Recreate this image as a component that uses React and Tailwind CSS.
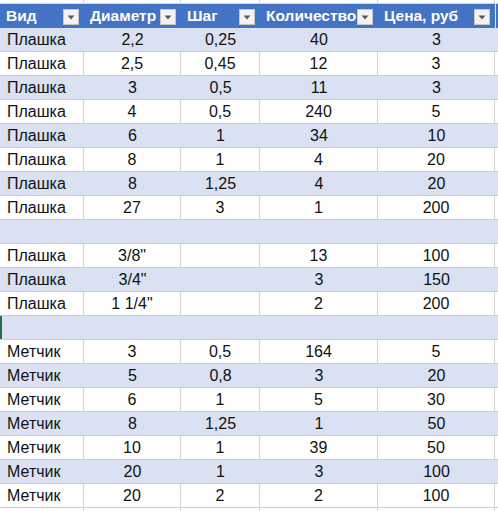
const rows = [
  ["Плашка", "2,2", "0,25", "40", "3"],
  ["Плашка", "2,5", "0,45", "12", "3"],
  ["Плашка", "3", "0,5", "11", "3"],
  ["Плашка", "4", "0,5", "240", "5"],
  ["Плашка", "6", "1", "34", "10"],
  ["Плашка", "8", "1", "4", "20"],
  ["Плашка", "8", "1,25", "4", "20"],
  ["Плашка", "27", "3", "1", "200"],
  null,
  ["Плашка", "3/8\"", "", "13", "100"],
  ["Плашка", "3/4\"", "", "3", "150"],
  ["Плашка", "1 1/4\"", "", "2", "200"],
  "active",
  ["Метчик", "3", "0,5", "164", "5"],
  ["Метчик", "5", "0,8", "3", "20"],
  ["Метчик", "6", "1", "5", "30"],
  ["Метчик", "8", "1,25", "1", "50"],
  ["Метчик", "10", "1", "39", "50"],
  ["Метчик", "20", "1", "3", "100"],
  ["Метчик", "20", "2", "2", "100"],
];

const headers = ["Вид", "Диаметр", "Шаг", "Количество", "Цена, руб"];
const widths = ["w-[84px]", "w-[97px]", "w-[79px]", "w-[118px]", "w-[117px]"];

const FilterButton = () => (
  <span className="absolute right-[5px] top-[5px] w-[16px] h-[16px] bg-[#f3f3f3] border border-[#c8c8c8] flex items-center justify-center">
    <svg width="8" height="5" viewBox="0 0 8 5">
      <path d="M0.5 0.5 L7.5 0.5 L4 4.5 Z" fill="#5a5a5a" />
    </svg>
  </span>
);

const App = () => {
  return (
    <div
      className="w-[498px] h-[511px] overflow-hidden bg-white text-[16px] text-[#111]"
      style={{ fontFamily: '"Liberation Sans", Arial, sans-serif' }}
    >
      {/* strip of the row above */}
      <div className="flex h-[4px] border-b border-[#d4d4d4]">
        {widths.map((w, i) => (
          <div key={i} className={`${w} shrink-0 border-r border-[#d4d4d4]`} />
        ))}
        <div className="flex-1" />
      </div>

      <div className="flex h-[24px] bg-[#4472c4]">
        {headers.map((h, i) => (
          <div
            key={h}
            className={`${widths[i]} shrink-0 relative flex items-center pl-[6px] text-[15.5px] font-bold text-white overflow-hidden whitespace-nowrap`}
          >
            {h}
            <FilterButton />
          </div>
        ))}
        <div className="flex-1 border-l border-[#dfe6f3]" />
      </div>

      {rows.map((r, idx) => {
        const blue = idx % 2 === 0;
        const cells = Array.isArray(r) ? r : ["", "", "", "", ""];
        return (
          <div
            key={idx}
            className={`flex h-[24px] border-b border-[#c6cfdf] ${blue ? "bg-[#d9e1f2]" : "bg-white"}`}
          >
            {cells.map((c, i) => (
              <div
                key={i}
                className={`${widths[i]} shrink-0 flex items-center whitespace-nowrap pt-[1px] ${
                  i === 0 ? "pl-[7px]" : "justify-center"
                } ${blue ? "" : "border-r border-[#d4d4d4]"} ${
                  r === "active" && i === 0 ? "border-l-2 border-l-[#217346]" : ""
                }`}
              >
                {c}
              </div>
            ))}
            <div className="flex-1" />
          </div>
        );
      })}

      <div className="flex h-[4px]">
        {widths.map((w, i) => (
          <div key={i} className={`${w} shrink-0 h-full border-r border-[#d4d4d4]`} />
        ))}
      </div>
    </div>
  );
};

export default App;
